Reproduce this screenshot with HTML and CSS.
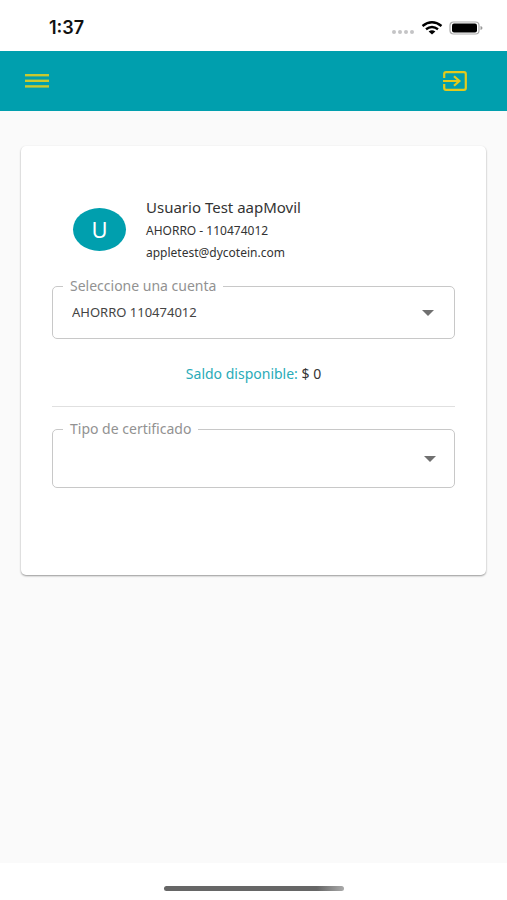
FILE: index.html
```html
<!DOCTYPE html>
<html lang="es">
<head>
    <meta charset="UTF-8">
    <meta name="viewport" content="width=device-width, initial-scale=1.0">
    <title>Certificados</title>
    <link rel="stylesheet" href="styles.css">
</head>
<body>

    <!-- Status bar -->
    <div class="status-bar">
        <span class="time">1:37</span>
        <div class="status-icons">
            <svg width="24" height="6" viewBox="0 0 24 6" fill="#c4c4c6">
                <circle cx="3" cy="3" r="2"/>
                <circle cx="9" cy="3" r="2"/>
                <circle cx="15" cy="3" r="2"/>
                <circle cx="21" cy="3" r="2"/>
            </svg>
            <svg width="22" height="14" viewBox="0 0 22 14" fill="none" stroke="#000" stroke-width="2.4">
                <path d="M1.5 5Q11 -2.4 20.500 5"/>
                <path d="M5 8.200Q11 3.600 17 8.200"/>
                <path d="M7.600 10.400Q11 8 14.400 10.400L11 13.400Z" fill="#000" stroke="none"/>
            </svg>
            <svg width="34" height="14" viewBox="0 0 34 14">
                <rect x="1" y="1" width="29" height="12" rx="3.500" fill="#fff" stroke="#aaa" stroke-width="1.200"/>
                <rect x="3" y="2.600" width="25" height="8.800" rx="2" fill="#000"/>
                <path d="M31.500 5v4q2-.5 2-2t-2-2z" fill="#999"/>
            </svg>
        </div>
    </div>

    <header class="toolbar">
        <button type="button" aria-label="Menú">
            <svg width="24" height="14" viewBox="0 0 24 14" fill="#c9c92f">
                <rect y="0" width="24" height="2.400"/>
                <rect y="5.600" width="24" height="2.400"/>
                <rect y="11.200" width="24" height="2.400"/>
            </svg>
        </button>
        <button type="button" aria-label="Salir">
            <svg width="24" height="20" viewBox="0 0 24 20" fill="none" stroke="#e3ca1c" stroke-width="2.200">
                <path d="M1.200 7V3Q1.200 1.200 3 1.200H21Q22.800 1.200 22.800 3V17Q22.800 18.800 21 18.800H3Q1.200 18.800 1.200 17V13"/>
                <path d="M0 10H16M11 5.200L16.400 10L11 14.800"/>
            </svg>
        </button>
    </header>

    <main>
        <div class="card">
            <!-- User -->
            <div class="user">
                <div class="avatar">U</div>
                <div class="user-info">
                    <h1>Usuario Test aapMovil</h1>
                    <p>AHORRO - 110474012</p>
                    <p>appletest@dycotein.com</p>
                </div>
            </div>

            <!-- Account -->
            <fieldset class="field">
                <legend><label for="cuenta">Seleccione una cuenta</label></legend>
                <div class="select-box">
                    <select id="cuenta">
                        <option value="110474012">AHORRO 110474012</option>
                    </select>
                </div>
            </fieldset>

            <p class="balance"><span>Saldo disponible:</span> $ 0</p>

            <!-- Certificate type -->
            <fieldset class="field field-tall">
                <legend><label for="tipo">Tipo de certificado</label></legend>
                <div class="select-box">
                    <select id="tipo">
                        <option value=""></option>
                    </select>
                </div>
            </fieldset>
        </div>
    </main>

    <div class="home-area">
        <div class="home-bar"></div>
    </div>

</body>
</html>
```
FILE: styles.css
```css
* {
    box-sizing: border-box;
}
body {
    font-family: "Noto Sans", "Open Sans", sans-serif;
    background-color: white;
    color: #333;
    display: flex;
    flex-direction: column;
    min-height: 100vh;
    margin: 0;
}
h1, p {
    margin: 0;
    font-weight: 400;
}
svg {
    display: block;
}

.status-bar {
    display: flex;
    justify-content: space-between;
    align-items: center;
    height: 51px;
    padding: 4px 24px 0 49px;
}
.time {
    font-family: Inter, sans-serif;
    font-size: 18px;
    font-weight: 600;
    color: #111;
}
.status-icons {
    display: flex;
    align-items: center;
    gap: 6px;
}
.status-icons svg:first-child {
    margin-top: 8px;
}

.toolbar {
    display: flex;
    justify-content: space-between;
    align-items: center;
    height: 60px;
    padding: 0 40px 0 25px;
    background-color: #009fae;
}
.toolbar button {
    padding: 0;
    border: none;
    background: none;
    cursor: pointer;
}

main {
    flex: 1;
    padding: 35px 21px;
    background-color: #fafafa;
}
.card {
    padding: 48px 31px 87px;
    border-radius: 5px;
    background-color: white;
    box-shadow: 0 1px 2px rgba(0, 0, 0, 0.4);
}

.user {
    display: flex;
    align-items: center;
    gap: 20px;
    padding-left: 21px;
    margin-bottom: 12px;
}
.avatar {
    width: 53px;
    height: 43px;
    border-radius: 50%;
    background-color: #009fae;
    color: white;
    font-size: 22px;
    line-height: 43px;
    text-align: center;
}
.user-info h1 {
    font-size: 15px;
    line-height: 26px;
}
.user-info p {
    font-size: 12px;
    line-height: 22px;
}

.field {
    margin: 0;
    padding: 0;
    border: 1px solid #c8c8c8;
    border-radius: 5px;
}
.field legend {
    margin-left: 10px;
    padding: 0 7px;
    color: #929292;
    font-size: 14px;
    line-height: 20px;
}
.select-box {
    position: relative;
}
.select-box::after {
    content: "";
    position: absolute;
    top: 14px;
    right: 20px;
    border: 6px solid transparent;
    border-top-color: #707070;
    border-bottom: none;
    pointer-events: none;
}
.field select {
    appearance: none;
    display: block;
    width: 100%;
    height: 42px;
    padding: 0 40px 10px 19px;
    border: none;
    background: none;
    color: #444;
    font-family: inherit;
    font-size: 13px;
}
.field-tall select {
    height: 48px;
}
.field-tall .select-box::after {
    top: 17px;
    right: 18px;
}

.balance {
    margin-bottom: 12px;
    padding: 24px 0 21px;
    border-bottom: 1px solid #e0e0e0;
    font-size: 14px;
    line-height: 22px;
    text-align: center;
}
.balance span {
    color: #2aabb8;
}

.home-area {
    display: flex;
    justify-content: center;
    height: 37px;
    padding-top: 23px;
}
.home-bar {
    width: 180px;
    height: 5px;
    border-radius: 3px;
    background: linear-gradient(to right, #666 85%, #aaa);
}
```
